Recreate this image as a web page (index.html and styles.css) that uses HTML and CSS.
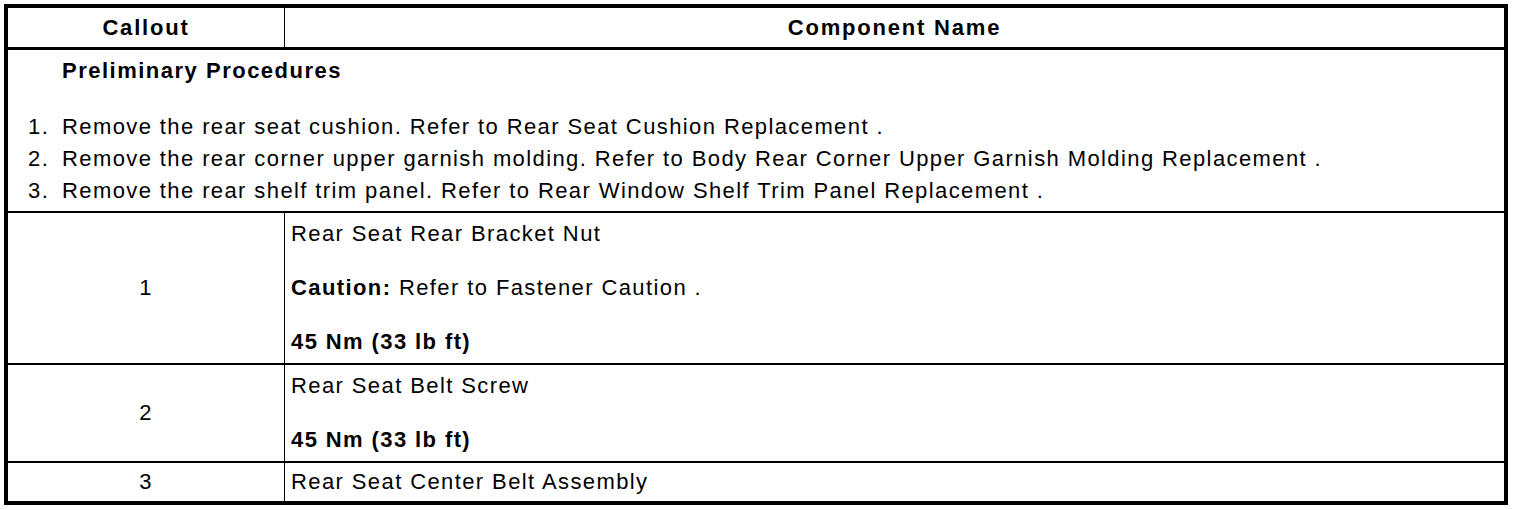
FILE: index.html
```html
<!DOCTYPE html>
<html>
<head>
<meta charset="utf-8">
<link rel="stylesheet" href="styles.css">
</head>
<body>
<table class="parts">
  <thead>
    <tr class="head-row">
      <th class="col-callout">Callout</th>
      <th class="col-name">Component Name</th>
    </tr>
  </thead>
  <tbody>
    <tr class="prelim-row">
      <td colspan="2" class="prelim">
        <p class="prelim-title">Preliminary Procedures</p>
        <ol class="steps">
          <li>Remove the rear seat cushion. Refer to Rear Seat Cushion Replacement .</li>
          <li>Remove the rear corner upper garnish molding. Refer to Body Rear Corner Upper Garnish Molding Replacement .</li>
          <li>Remove the rear shelf trim panel. Refer to Rear Window Shelf Trim Panel Replacement .</li>
        </ol>
      </td>
    </tr>
    <tr class="item-row">
      <td class="callout">1</td>
      <td class="name">
        <p>Rear Seat Rear Bracket Nut</p>
        <p><b>Caution:</b> Refer to Fastener Caution .</p>
        <p><b>45 Nm (33 lb ft)</b></p>
      </td>
    </tr>
    <tr class="item-row">
      <td class="callout">2</td>
      <td class="name">
        <p>Rear Seat Belt Screw</p>
        <p><b>45 Nm (33 lb ft)</b></p>
      </td>
    </tr>
    <tr class="item-row item-last">
      <td class="callout">3</td>
      <td class="name">
        <p>Rear Seat Center Belt Assembly</p>
      </td>
    </tr>
  </tbody>
</table>
</body>
</html>
```
FILE: styles.css
```css
html, body {
  background: #fff;
}
body {
  margin: 4px;
  font-family: "Liberation Sans", Arial, Helvetica, sans-serif;
  font-size: 22px;
  line-height: 26px;
  color: #000;
  letter-spacing: 1.4px;
}
.parts {
  border-collapse: collapse;
  width: 1504px;
  border: 4px solid #000;
}
.parts .head-row th {
  padding: 0;
  font-weight: bold;
  text-align: center;
  height: 39px;
  border-bottom: 3px solid #000;
  vertical-align: middle;
  letter-spacing: 1.8px;
}
.parts .head-row .col-callout {
  width: 276px;
  border-right: 1px solid #000;
}
.parts .prelim {
  padding: 8px 8px 4px 0;
  border-bottom: 2px solid #000;
}
.prelim-title {
  margin: 0 0 27px 54px;
  font-weight: bold;
  letter-spacing: 1.5px;
}
.steps {
  margin: 0;
  padding: 0 0 0 20px;
  list-style: none;
  counter-reset: step;
}
.steps li {
  line-height: 32px;
  counter-increment: step;
  display: flex;
}
.steps li::before {
  content: counter(step) ".";
  flex: 0 0 34px;
}
.parts .item-row td {
  border-bottom: 2px solid #000;
}
.parts .callout {
  padding: 0;
  text-align: center;
  vertical-align: middle;
  border-right: 1px solid #000;
}
.parts .name {
  vertical-align: top;
  padding: 8px 6px 8px 6px;
}
.parts .item-last .name {
  padding: 6px 6px 6px 6px;
}
.name p {
  margin: 0;
}
.name p + p {
  margin-top: 28px;
}
```
